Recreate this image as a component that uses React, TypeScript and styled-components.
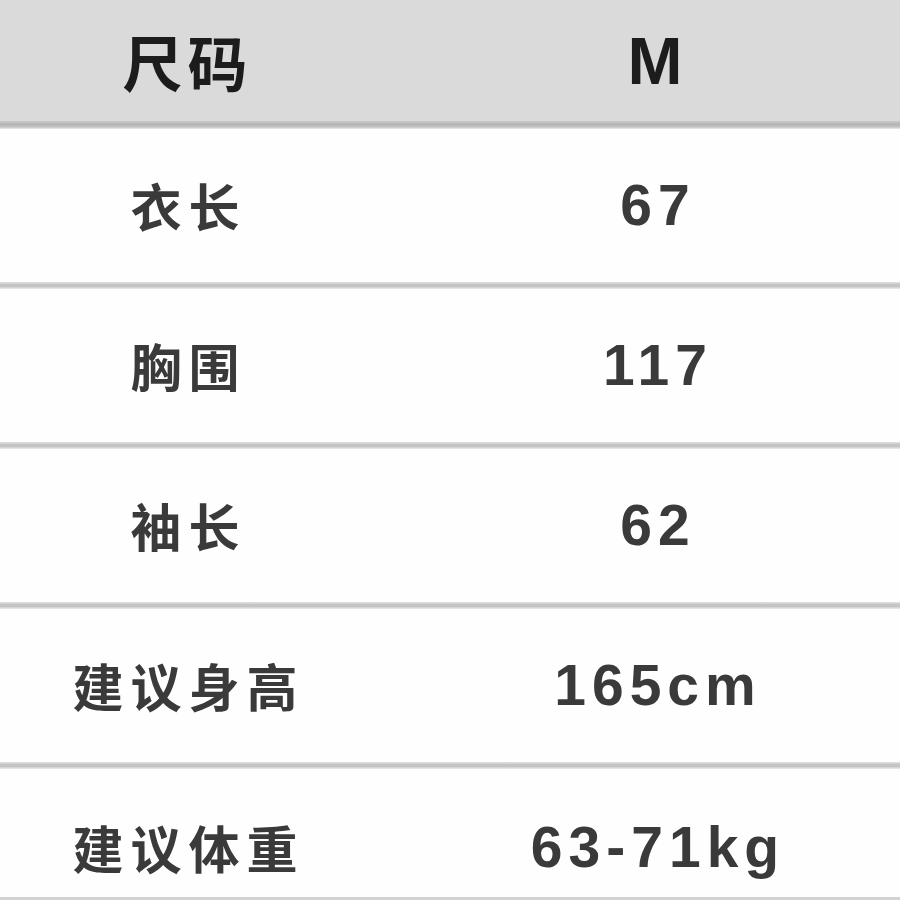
import React from "react";
import styled, { createGlobalStyle } from "styled-components";

const Global = createGlobalStyle`
  html, body { margin: 0; padding: 0; background: #ffffff; }
  body { width: 900px; height: 900px; overflow: hidden; }
`;

const Table = styled.div`
  box-sizing: border-box;
  width: 900px;
  height: 900px;
  display: flex;
  flex-direction: column;
  background: #fefefe;
  border-bottom: 3px solid #d2d2d2;
  overflow: hidden;
`;

const Row = styled.div<{ $h: number; $head?: boolean }>`
  flex: 0 0 ${(p) => p.$h}px;
  display: grid;
  grid-template-columns: 370px 490px;
  column-gap: 40px;
  align-items: center;
  background: ${(p) => (p.$head ? "#dadada" : "#fefefe")};
`;

const Divider = styled.div<{ $dark?: boolean }>`
  flex: 0 0 ${(p) => (p.$dark ? 8 : 7)}px;
  background: ${(p) =>
    p.$dark
      ? "linear-gradient(#c9c9c9, #b4b4b4 45%, #c4c4c4 75%, #ececec)"
      : "linear-gradient(#e4e4e4, #c2c2c2 40%, #c6c6c6 65%, #ececec)"};
`;

const Label = styled.div<{ $head?: boolean }>`
  text-align: center;
  font-family: "Noto Sans CJK SC", "Noto Sans", sans-serif;
  font-weight: 700;
  font-size: ${(p) => (p.$head ? 60 : 51)}px;
  letter-spacing: ${(p) => (p.$head ? 5 : 7)}px;
  padding-left: ${(p) => (p.$head ? 5 : 7)}px;
  color: ${(p) => (p.$head ? "#1c1c1c" : "#3a3a3a")};
  line-height: 1;
`;

const Value = styled.div<{ $head?: boolean }>`
  text-align: center;
  font-family: "Liberation Sans", Arial, sans-serif;
  font-weight: 700;
  font-size: ${(p) => (p.$head ? 66 : 57)}px;
  letter-spacing: ${(p) => (p.$head ? 0 : 6)}px;
  padding-left: ${(p) => (p.$head ? 0 : 6)}px;
  color: ${(p) => (p.$head ? "#1c1c1c" : "#3a3a3a")};
  line-height: 1;
`;

const rows = [
  { k: "衣长", v: "67" },
  { k: "胸围", v: "117" },
  { k: "袖长", v: "62" },
  { k: "建议身高", v: "165cm" },
  { k: "建议体重", v: "63-71kg" },
];

export default function App() {
  return (
    <>
      <Global />
      <Table>
        <Row $h={121} $head>
          <Label $head>尺码</Label>
          <Value $head>M</Value>
        </Row>
        <Divider $dark />
        {rows.map((r, i) => (
          <React.Fragment key={r.k}>
            <Row $h={i === rows.length - 1 ? 156 : 153}>
              <Label>{r.k}</Label>
              <Value>{r.v}</Value>
            </Row>
            {i < rows.length - 1 && <Divider />}
          </React.Fragment>
        ))}
      </Table>
    </>
  );
}
